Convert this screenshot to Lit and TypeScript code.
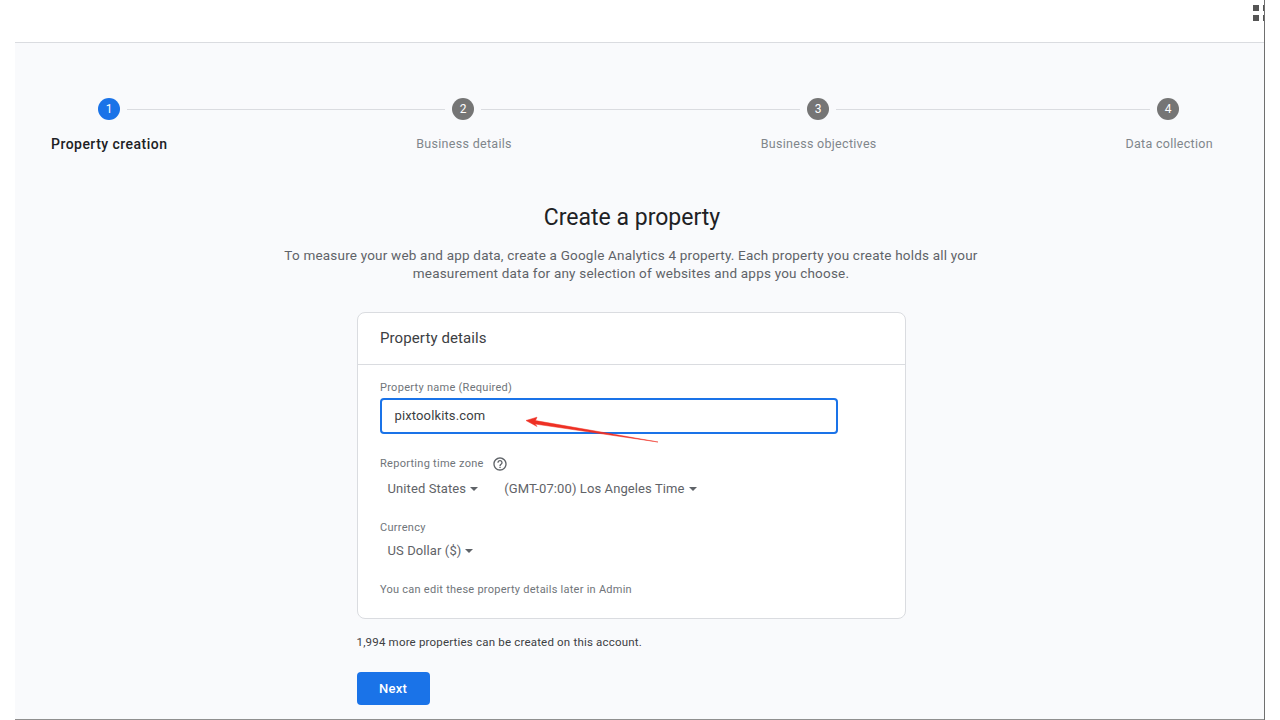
import { LitElement, html, css, svg } from "lit";
import { customElement } from "lit/decorators.js";

const steps = [
  { n: 1, label: "Property creation", active: true },
  { n: 2, label: "Business details", active: false },
  { n: 3, label: "Business objectives", active: false },
  { n: 4, label: "Data collection", active: false },
];
const caret = html`<svg class="caret" width="8" height="4" viewBox="0 0 8 4"><path d="M0 0h8L4 4z" fill="#5f6368"></path></svg>`;

@customElement("app-root")
export class AppRoot extends LitElement {
  static styles = css`
    :host { display: block; width: 1280px; height: 720px; overflow: hidden; background: #fff;
      font-family: Roboto, "Liberation Sans", sans-serif; color: #5f6368; }
    .frame { width: 1265px; height: 720px; box-sizing: border-box; border-right: 1px solid #6f6f6f;
      display: flex; flex-direction: column; position: relative; overflow: hidden; }
    .top { height: 42px; flex: none; display: flex; justify-content: flex-end; }
    .apps { display: grid; grid-template-columns: 6px 6px; gap: 4px; margin: 5px -5px 0 0; width: 16px; align-content: start; }
    .apps i { width: 6px; height: 6px; background: #555; }
    .panel { flex: 1; margin-left: 15px; background: #f9fafc; border-top: 1px solid #dadce0; border-bottom: 1px solid #8f8f8f; padding: 55px 0 0; min-height: 0; }
    .stepper { padding: 0 51px 0 36px; }
    .track { display: flex; align-items: center; padding-left: 47px; height: 22px; }
    .circle { width: 22px; height: 22px; flex: none; border-radius: 50%; background: #757575; color: #fff; font-size: 12px;
      display: flex; align-items: center; justify-content: center; }
    .circle.on { background: #1a73e8; }
    .line { height: 1px; background: #dadce0; margin: 1px 7px 0; flex: none; }
    .labels { display: flex; justify-content: space-between; margin-top: 14px; font-size: 12.5px; line-height: 20px; letter-spacing: .3px; color: #80868b; }
    .labels .on { color: #202124; font-size: 14px; font-weight: 500; letter-spacing: .47px; }
    .main { padding-right: 17px; display: flex; flex-direction: column; align-items: center; }
    h1 { margin: 49px 0 0 2px; font-size: 23px; line-height: 30px; font-weight: 400; color: #202124; }
    .desc { margin: 13px 0 0; width: 720px; text-align: center; font-size: 13.5px; line-height: 18px; letter-spacing: .2px; color: #5f6368; }
    .col { width: 549px; margin-top: 30px; }
    .card { background: #fff; border: 1px solid #dadce0; border-radius: 8px; height: 307px; box-sizing: border-box; }
    .card h2 { margin: 0; padding: 0 22.5px; height: 52px; box-sizing: border-box; border-bottom: 1px solid #dadce0; font-size: 15px; font-weight: 400;
      line-height: 51px; color: #3c4043; letter-spacing: .1px; }
    .body { padding: 16px 22px 0; }
    .lbl { font-size: 11px; line-height: 14px; letter-spacing: .28px; color: #70757a; display: flex; align-items: center; gap: 8px; padding-left: .5px; }
    .field { margin-top: 3px; width: 458px; height: 36px; box-sizing: border-box; border: 2px solid #1a73e8; border-radius: 4px; padding: 0 13px;
      font-size: 13px; line-height: 32px; color: #3c4043; letter-spacing: .13px; }
    .tz { margin-top: 22px; height: 16px; }
    .selects { display: flex; margin-top: 7px; padding-left: 8px; font-size: 13px; line-height: 20px; letter-spacing: .1px; color: #5f6368; }
    .sel { display: flex; align-items: center; gap: 4px; }
    .sel + .sel { margin-left: 26px; }
    .cur { margin-top: 22px; }
    .cur-sel { margin-top: 6px; }
    .note { margin: 21px 0 0; padding-left: .5px; font-size: 11px; line-height: 16px; letter-spacing: .25px; color: #70757a; }
    .more { margin: 15px 0 0; font-size: 11.5px; line-height: 16px; letter-spacing: .19px; color: #3c4043; }
    .next { margin-top: 22px; width: 73px; height: 33px; border: 0; border-radius: 4px; background: #1a73e8; color: #fff; font: 500 13px/33px Roboto, sans-serif;
      letter-spacing: .25px; display: block; padding: 0; }
    .arrow { position: absolute; left: 0; top: 0; pointer-events: none; }
  `;

  render() {
    const gaps = [318, 319, 314];
    return html`<div class="frame">
      <div class="top"><div class="apps"><i></i><i></i><i></i><i></i></div></div>
      <div class="panel">
        <div class="stepper">
          <div class="track">
            ${steps.map((s, i) => html`<div class="circle ${s.active ? "on" : ""}">${s.n}</div>${i < 3 ? html`<div class="line" style="width:${gaps[i]}px"></div>` : ""}`)}
          </div>
          <div class="labels">${steps.map((s) => html`<div class=${s.active ? "on" : ""}>${s.label}</div>`)}</div>
        </div>
        <div class="main">
          <h1>Create a property</h1>
          <p class="desc">To measure your web and app data, create a Google Analytics 4 property. Each property you create holds all your<br />measurement data for any selection of websites and apps you choose.</p>
          <div class="col">
            <div class="card">
              <h2>Property details</h2>
              <div class="body">
                <div class="lbl">Property name (Required)</div>
                <div class="field">pixtoolkits.com</div>
                <div class="lbl tz">Reporting time zone
                  <svg width="16" height="16" viewBox="0 0 24 24" fill="#5f6368"><path d="M11 18h2v-2h-2v2zm1-16C6.48 2 2 6.48 2 12s4.48 10 10 10 10-4.48 10-10S17.52 2 12 2zm0 18c-4.41 0-8-3.59-8-8s3.59-8 8-8 8 3.59 8 8-3.59 8-8 8zm0-14c-2.21 0-4 1.79-4 4h2c0-1.1.9-2 2-2s2 .9 2 2c0 2-3 1.75-3 5h2c0-2.25 3-2.5 3-5 0-2.21-1.79-4-4-4z"></path></svg>
                </div>
                <div class="selects">
                  <div class="sel">United States ${caret}</div>
                  <div class="sel">(GMT-07:00) Los Angeles Time ${caret}</div>
                </div>
                <div class="lbl cur">Currency</div>
                <div class="selects cur-sel"><div class="sel">US Dollar ($) ${caret}</div></div>
                <p class="note">You can edit these property details later in Admin</p>
              </div>
            </div>
            <p class="more">1,994 more properties can be created on this account.</p>
            <button class="next">Next</button>
          </div>
        </div>
      </div>
      <svg class="arrow" width="1264" height="718" viewBox="0 0 1264 718">${svg`
        <path d="M526 420.5L537 417.2L535.5 420.6L658 442L535 424L537 426.5Z" fill="#ee3024" stroke="#ee3024" stroke-width=".5"></path>
      `}</svg>
    </div>`;
  }
}
